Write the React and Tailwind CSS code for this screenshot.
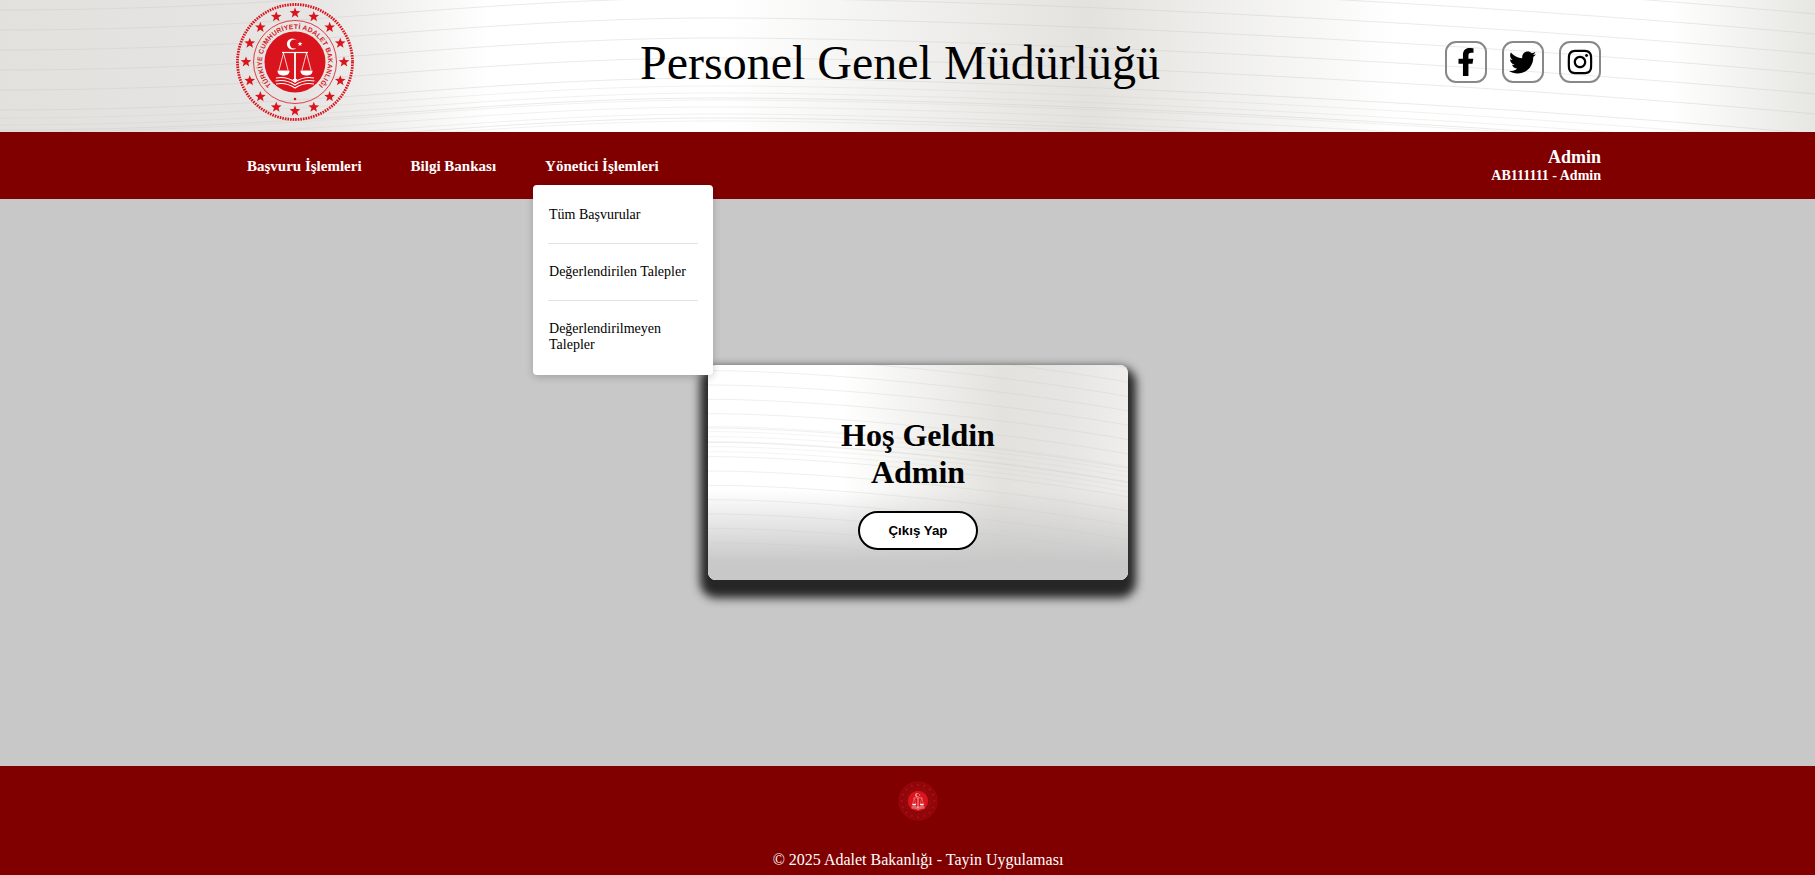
import { FaFacebookF, FaTwitter, FaInstagram } from "react-icons/fa";

const RED = "#d9141c";

const navItems = ["Başvuru İşlemleri", "Bilgi Bankası"];
const menuItems = ["Tüm Başvurular", "Değerlendirilen Talepler", "Değerlendirilmeyen Talepler"];

// star points around (cx, cy)
const starPoints = (cx, cy, r) => {
  const pts = [];
  for (let i = 0; i < 10; i++) {
    const a = (Math.PI / 5) * i - Math.PI / 2;
    const rad = i % 2 === 0 ? r : r * 0.42;
    pts.push(`${(cx + rad * Math.cos(a)).toFixed(2)},${(cy + rad * Math.sin(a)).toFixed(2)}`);
  }
  return pts.join(" ");
};

function Emblem({ id, outerOpacity = 1, tint, className }) {
  const stars = Array.from({ length: 16 }, (_, i) => {
    const a = (i * 22.5 * Math.PI) / 180;
    return [60 + 49 * Math.sin(a), 60 - 49 * Math.cos(a)];
  });

  return (
    <svg viewBox="0 0 120 120" className={className}>
      <defs>
        <path id={id} d="M 41.1 87 A 33 33 0 1 1 78.9 87" />
      </defs>
      {tint && <circle cx="60" cy="60" r="58" fill={tint} />}
      <g opacity={outerOpacity}>
        <circle cx="60" cy="60" r="57.5" fill="none" stroke={RED} strokeWidth="2.8" strokeDasharray="1.6 1" />
        {stars.map(([x, y], i) => (
          <polygon key={i} points={starPoints(x, y, 5.6)} fill={RED} />
        ))}
        <circle cx="60" cy="60" r="41.5" fill="none" stroke={RED} strokeWidth="0.8" />
        <text fontFamily="'Liberation Sans', sans-serif" fontSize="6.8" fontWeight="700" fill={RED} letterSpacing="0.2">
          <textPath href={`#${id}`} startOffset="50%" textAnchor="middle">
            TÜRKİYE CUMHURİYETİ ADALET BAKANLIĞI
          </textPath>
        </text>
        <circle cx="60" cy="97" r="1.3" fill={RED} />
      </g>
      <circle cx="60" cy="60" r="30.5" fill={RED} />
      {/* crescent and star */}
      <circle cx="57.5" cy="42" r="5.6" fill="#fff" />
      <circle cx="59.3" cy="42" r="4.5" fill={RED} />
      <polygon points={starPoints(65, 42, 2.6)} fill="#fff" />
      {/* scale */}
      <g stroke="#fff" fill="none" strokeWidth="0.8">
        <path d="M47 50.5H73" strokeWidth="1.2" />
        <path d="M60 50.5V78" strokeWidth="1.8" />
        <path d="M48.5 51L44 68M48.5 51L53 68M71.5 51L67 68M71.5 51L76 68" />
      </g>
      <path d="M42.5 68.5H54.5C54.5 73 51 73.5 48.5 73.5C46 73.5 42.5 73 42.5 68.5Z" fill="#fff" />
      <path d="M65.5 68.5H77.5C77.5 73 74 73.5 71.5 73.5C69 73.5 65.5 73 65.5 68.5Z" fill="#fff" />
      <path d="M57.5 77L60 81L62.5 77Z" fill="#fff" />
      {/* book */}
      <g stroke="#fff" fill="none" strokeWidth="1.1">
        <path d="M41 76C48 74.5 54 76 60 80C66 76 72 74.5 79 76" />
        <path d="M40.5 79C48 77.5 54 79 60 83C66 79 72 77.5 79.5 79" />
        <path d="M41 82C48 80.5 54 82 60 86C66 82 72 80.5 79 82" />
      </g>
    </svg>
  );
}

// wavy line background, same drawing for header and card
function Waves({ viewBox, count = 10, spacing = 20, start = -10, opacity = 0.38 }) {
  const lines = Array.from({ length: count }, (_, i) => start + i * spacing);
  const dense = Array.from({ length: 6 }, (_, i) => 118 + i * 7);

  const linePath = (y) =>
    `M0 ${y} C300 ${y}, 460 ${y - 30}, 700 ${y - 32} C900 ${y - 33}, 1400 ${y - 14}, 1815 ${y + 24}`;

  return (
    <svg viewBox={viewBox} preserveAspectRatio="none" className="absolute inset-0 w-full h-full">
      {lines.map((y) => (
        <path key={y} d={linePath(y)} fill="none" stroke="#c9c9c4" strokeOpacity={opacity} strokeWidth="1" vectorEffect="non-scaling-stroke" />
      ))}
      {dense.map((y) => (
        <path key={y} d={linePath(y)} fill="none" stroke="#c9c9c4" strokeOpacity={opacity * 0.7} strokeWidth="1" vectorEffect="non-scaling-stroke" />
      ))}
    </svg>
  );
}

function SocialIcon({ children }) {
  return (
    <a className="w-[42px] h-[42px] flex items-center justify-center rounded-[11px] border-2 border-[#888] bg-transparent text-black">
      {children}
    </a>
  );
}

export default function App() {
  return (
    <div className="min-h-screen flex flex-col overflow-hidden bg-[#c8c8c8] text-black font-['Liberation_Serif',serif]">
      {/* Header */}
      <header className="relative h-[132px] overflow-hidden bg-[linear-gradient(90deg,#e2e1de_0%,#e6e5e3_17%,#fff_27%,#fff_40%,#e3e2de_60%,#fff_77%,#fff_92%,#e6e6e2_100%)]">
        <Waves viewBox="0 0 1815 132" />
        <div className="relative ml-[235px] w-[1366px] h-[124px] flex items-center justify-between">
          <Emblem id="emblem-top" className="w-[120px] h-[120px]" />
          <h1 className="text-[48px] leading-[55px] font-normal">Personel Genel Müdürlüğü</h1>
          <div className="flex gap-[15px]">
            <SocialIcon><FaFacebookF size={28} /></SocialIcon>
            <SocialIcon><FaTwitter size={27} /></SocialIcon>
            <SocialIcon><FaInstagram size={28} /></SocialIcon>
          </div>
        </div>
      </header>

      {/* Nav */}
      <nav className="relative z-20 h-[67px] bg-[#800000] text-white">
        <div className="ml-[235px] w-[1366px] h-full flex items-center justify-between">
          <ul className="flex gap-[49px] pl-3 pt-px text-[15px] font-bold leading-[18px]">
            {navItems.map((item) => (
              <li key={item}>{item}</li>
            ))}
            <li className="relative">
              Yönetici İşlemleri
              <div className="absolute left-[-12px] top-[28px] w-[180px] bg-white rounded-[4px] shadow-[0_2px_8px_rgba(0,0,0,0.2)] text-black text-sm leading-4 font-normal pt-[2px] pb-[2px]">
                {menuItems.map((item, idx) => (
                  <div key={item}>
                    {idx > 0 && <div className="mx-[15px] border-t border-[#e3e3e3]" />}
                    <div className="px-4 py-5">{item}</div>
                  </div>
                ))}
              </div>
            </li>
          </ul>
          <div className="text-right font-bold">
            <div className="text-lg leading-[18px]">Admin</div>
            <div className="text-sm leading-4 mt-[2px]">AB111111 - Admin</div>
          </div>
        </div>
      </nav>

      {/* Main */}
      <main className="flex-1 flex items-center justify-center pl-[21px] pb-5">
        <div className="relative w-[420px] rounded-lg bg-[linear-gradient(90deg,#fff_0%,#fff_32%,#e3e2de_70%,#e6e5e3_85%,#efeeec_100%)] shadow-[0_10px_10px_8px_#262626]">
          <div className="absolute inset-0 rounded-lg overflow-hidden">
            <Waves viewBox="700 0 1115 300" count={24} spacing={20} start={-20} opacity={0.3} />
            <div className="absolute inset-0 bg-[linear-gradient(180deg,transparent_58%,#c8c8c8_92%)]" />
          </div>
          <div className="relative flex flex-col items-center pt-[52px] pb-[30px]">
            <h2 className="text-[32px] leading-[37px] font-bold text-center">
              Hoş Geldin
              <br />
              Admin
            </h2>
            <button className="mt-5 w-[120px] h-[39px] rounded-[20px] border-2 border-black bg-white text-[13.33px] font-bold font-['Liberation_Sans',sans-serif]">
              Çıkış Yap
            </button>
          </div>
        </div>
      </main>

      {/* Footer */}
      <footer className="h-[109px] bg-[#800000] text-white flex flex-col items-center pl-[21px] pt-[15px]">
        <Emblem id="emblem-bottom" outerOpacity={0.5} tint="#8c060a" className="w-10 h-10" />
        <p className="mt-[30px] text-base leading-[18px]">© 2025 Adalet Bakanlığı - Tayin Uygulaması</p>
      </footer>
    </div>
  );
}
